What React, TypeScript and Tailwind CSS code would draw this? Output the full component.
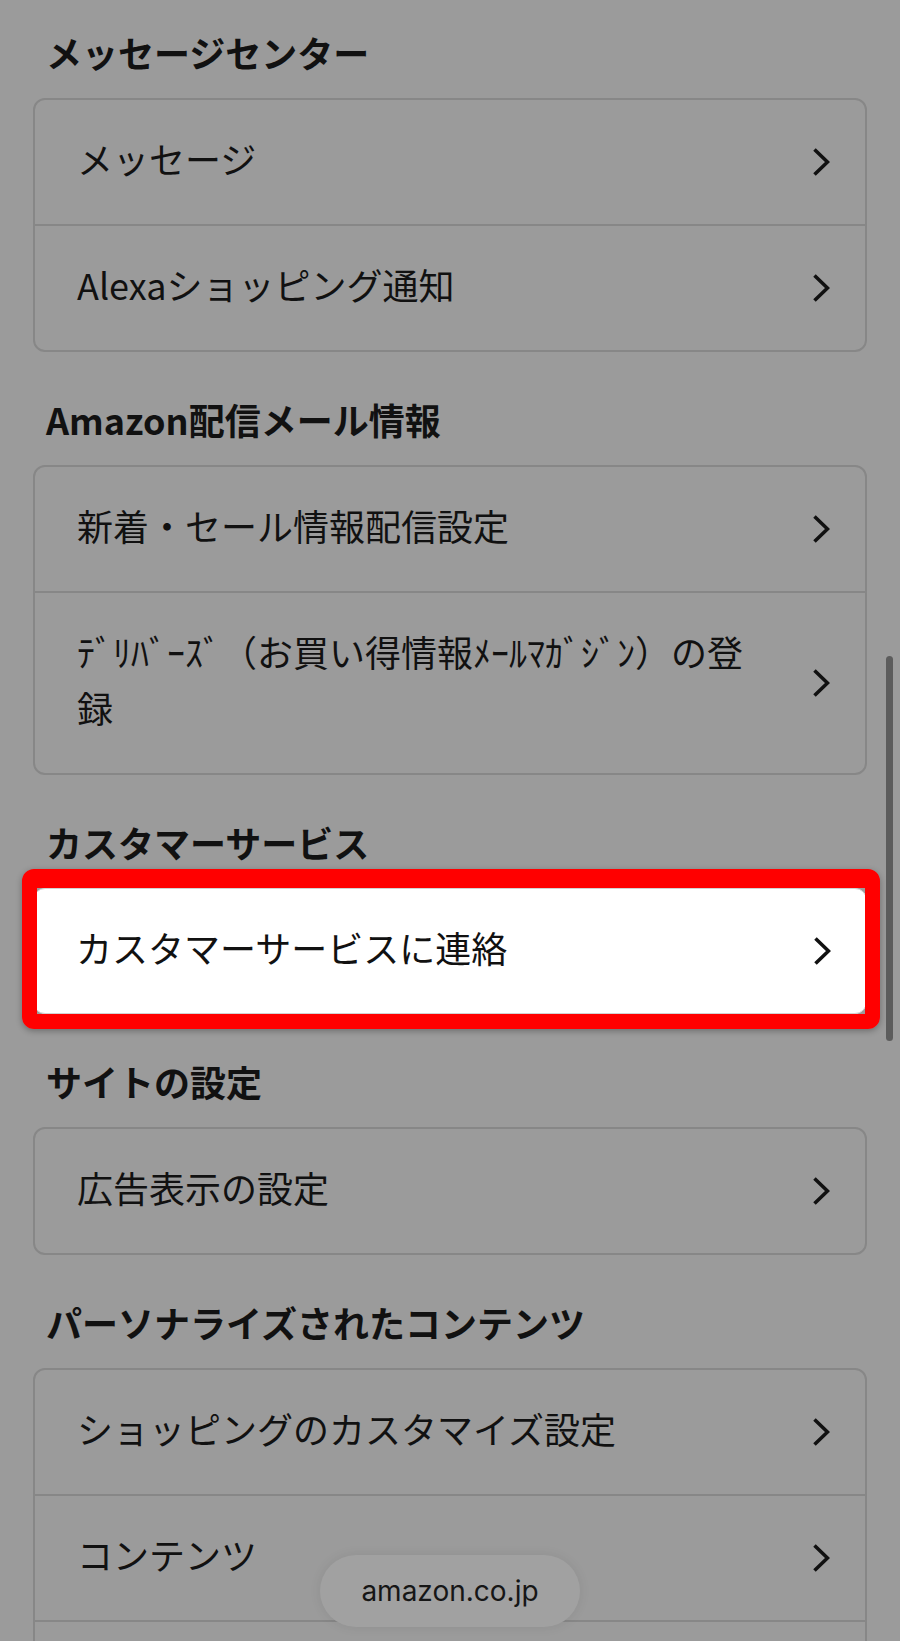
import React from 'react';

type Section = {
  title: string;
  items: string[];
  highlight?: boolean;
};

const sections: Section[] = [
  { title: 'メッセージセンター', items: ['メッセージ', 'Alexaショッピング通知'] },
  {
    title: 'Amazon配信メール情報',
    items: ['新着・セール情報配信設定', 'ﾃﾞﾘﾊﾞｰｽﾞ（お買い得情報ﾒｰﾙﾏｶﾞｼﾞﾝ）の登録'],
  },
  { title: 'カスタマーサービス', items: ['カスタマーサービスに連絡'], highlight: true },
  { title: 'サイトの設定', items: ['広告表示の設定'] },
  { title: 'パーソナライズされたコンテンツ', items: ['ショッピングのカスタマイズ設定', 'コンテンツ', ''] },
];

const Chevron = () => (
  <svg width="18" height="30" viewBox="0 0 18 30" fill="none" className="shrink-0">
    <path d="M2.5 2.5 L15.5 15 L2.5 27.5" stroke="#111111" strokeWidth="3.6" strokeLinejoin="miter" />
  </svg>
);

const Row: React.FC<{ label: string; first: boolean; tall?: boolean }> = ({ label, first, tall }) => (
  <div
    className={`flex items-center pl-[42px] pr-[35px] ${first ? '' : 'border-t-2 border-[#878787]'} ${tall ? 'min-h-[122px]' : 'min-h-[124px]'}`}
  >
    <div className="flex-1 pt-[30px] pb-[38px] pr-[40px] text-[36px] leading-[56px] text-[#111111]">
      {label}
    </div>
    <Chevron />
  </div>
);

export default function App() {
  return (
    <div
      className="relative h-[1641px] w-[900px] overflow-hidden bg-[#9b9b9b] px-[33px] pt-[30px]"
      style={{ fontFamily: '"Noto Sans CJK JP", "Noto Sans", sans-serif' }}
    >
      {sections.map((section, i) => (
        <div key={section.title} className={i === 0 ? '' : 'mt-[45px]'}>
          <h2 className="pl-[13px] text-[36px] font-bold leading-[44px] text-[#111111]">{section.title}</h2>
          {section.highlight ? (
            <div className="relative mt-[24px]">
              <div className="rounded-[12px] border border-[#d2d2d2] bg-white">
                {section.items.map((item, j) => (
                  <Row key={j} label={item} first={j === 0} tall />
                ))}
              </div>
              {/* red frame drawn over the card */}
              <div className="pointer-events-none absolute -left-[11px] -right-[13px] -top-[19px] -bottom-[15px] rounded-[12px] border-[15px] border-t-[19px] border-[#ff0000] shadow-[0_2px_6px_rgba(0,0,0,0.3)]" />
            </div>
          ) : (
            <div className="mt-[24px] rounded-[12px] border-2 border-[#878787]">
              {section.items.map((item, j) => (
                <Row key={j} label={item} first={j === 0} />
              ))}
            </div>
          )}
        </div>
      ))}

      {/* scroll indicator */}
      <div className="absolute left-[886px] top-[656px] h-[385px] w-[7px] rounded-full bg-[#5c5c5c]" />

      {/* url pill */}
      <div className="absolute left-[320px] top-[1555px] flex h-[72px] w-[260px] items-center justify-center rounded-full bg-[#a1a1a1] shadow-[0_0_12px_rgba(0,0,0,0.08)]">
        <span className="text-[28px] text-[#161616]" style={{ fontFamily: 'Inter, "Liberation Sans", sans-serif' }}>
          amazon.co.jp
        </span>
      </div>
    </div>
  );
}
